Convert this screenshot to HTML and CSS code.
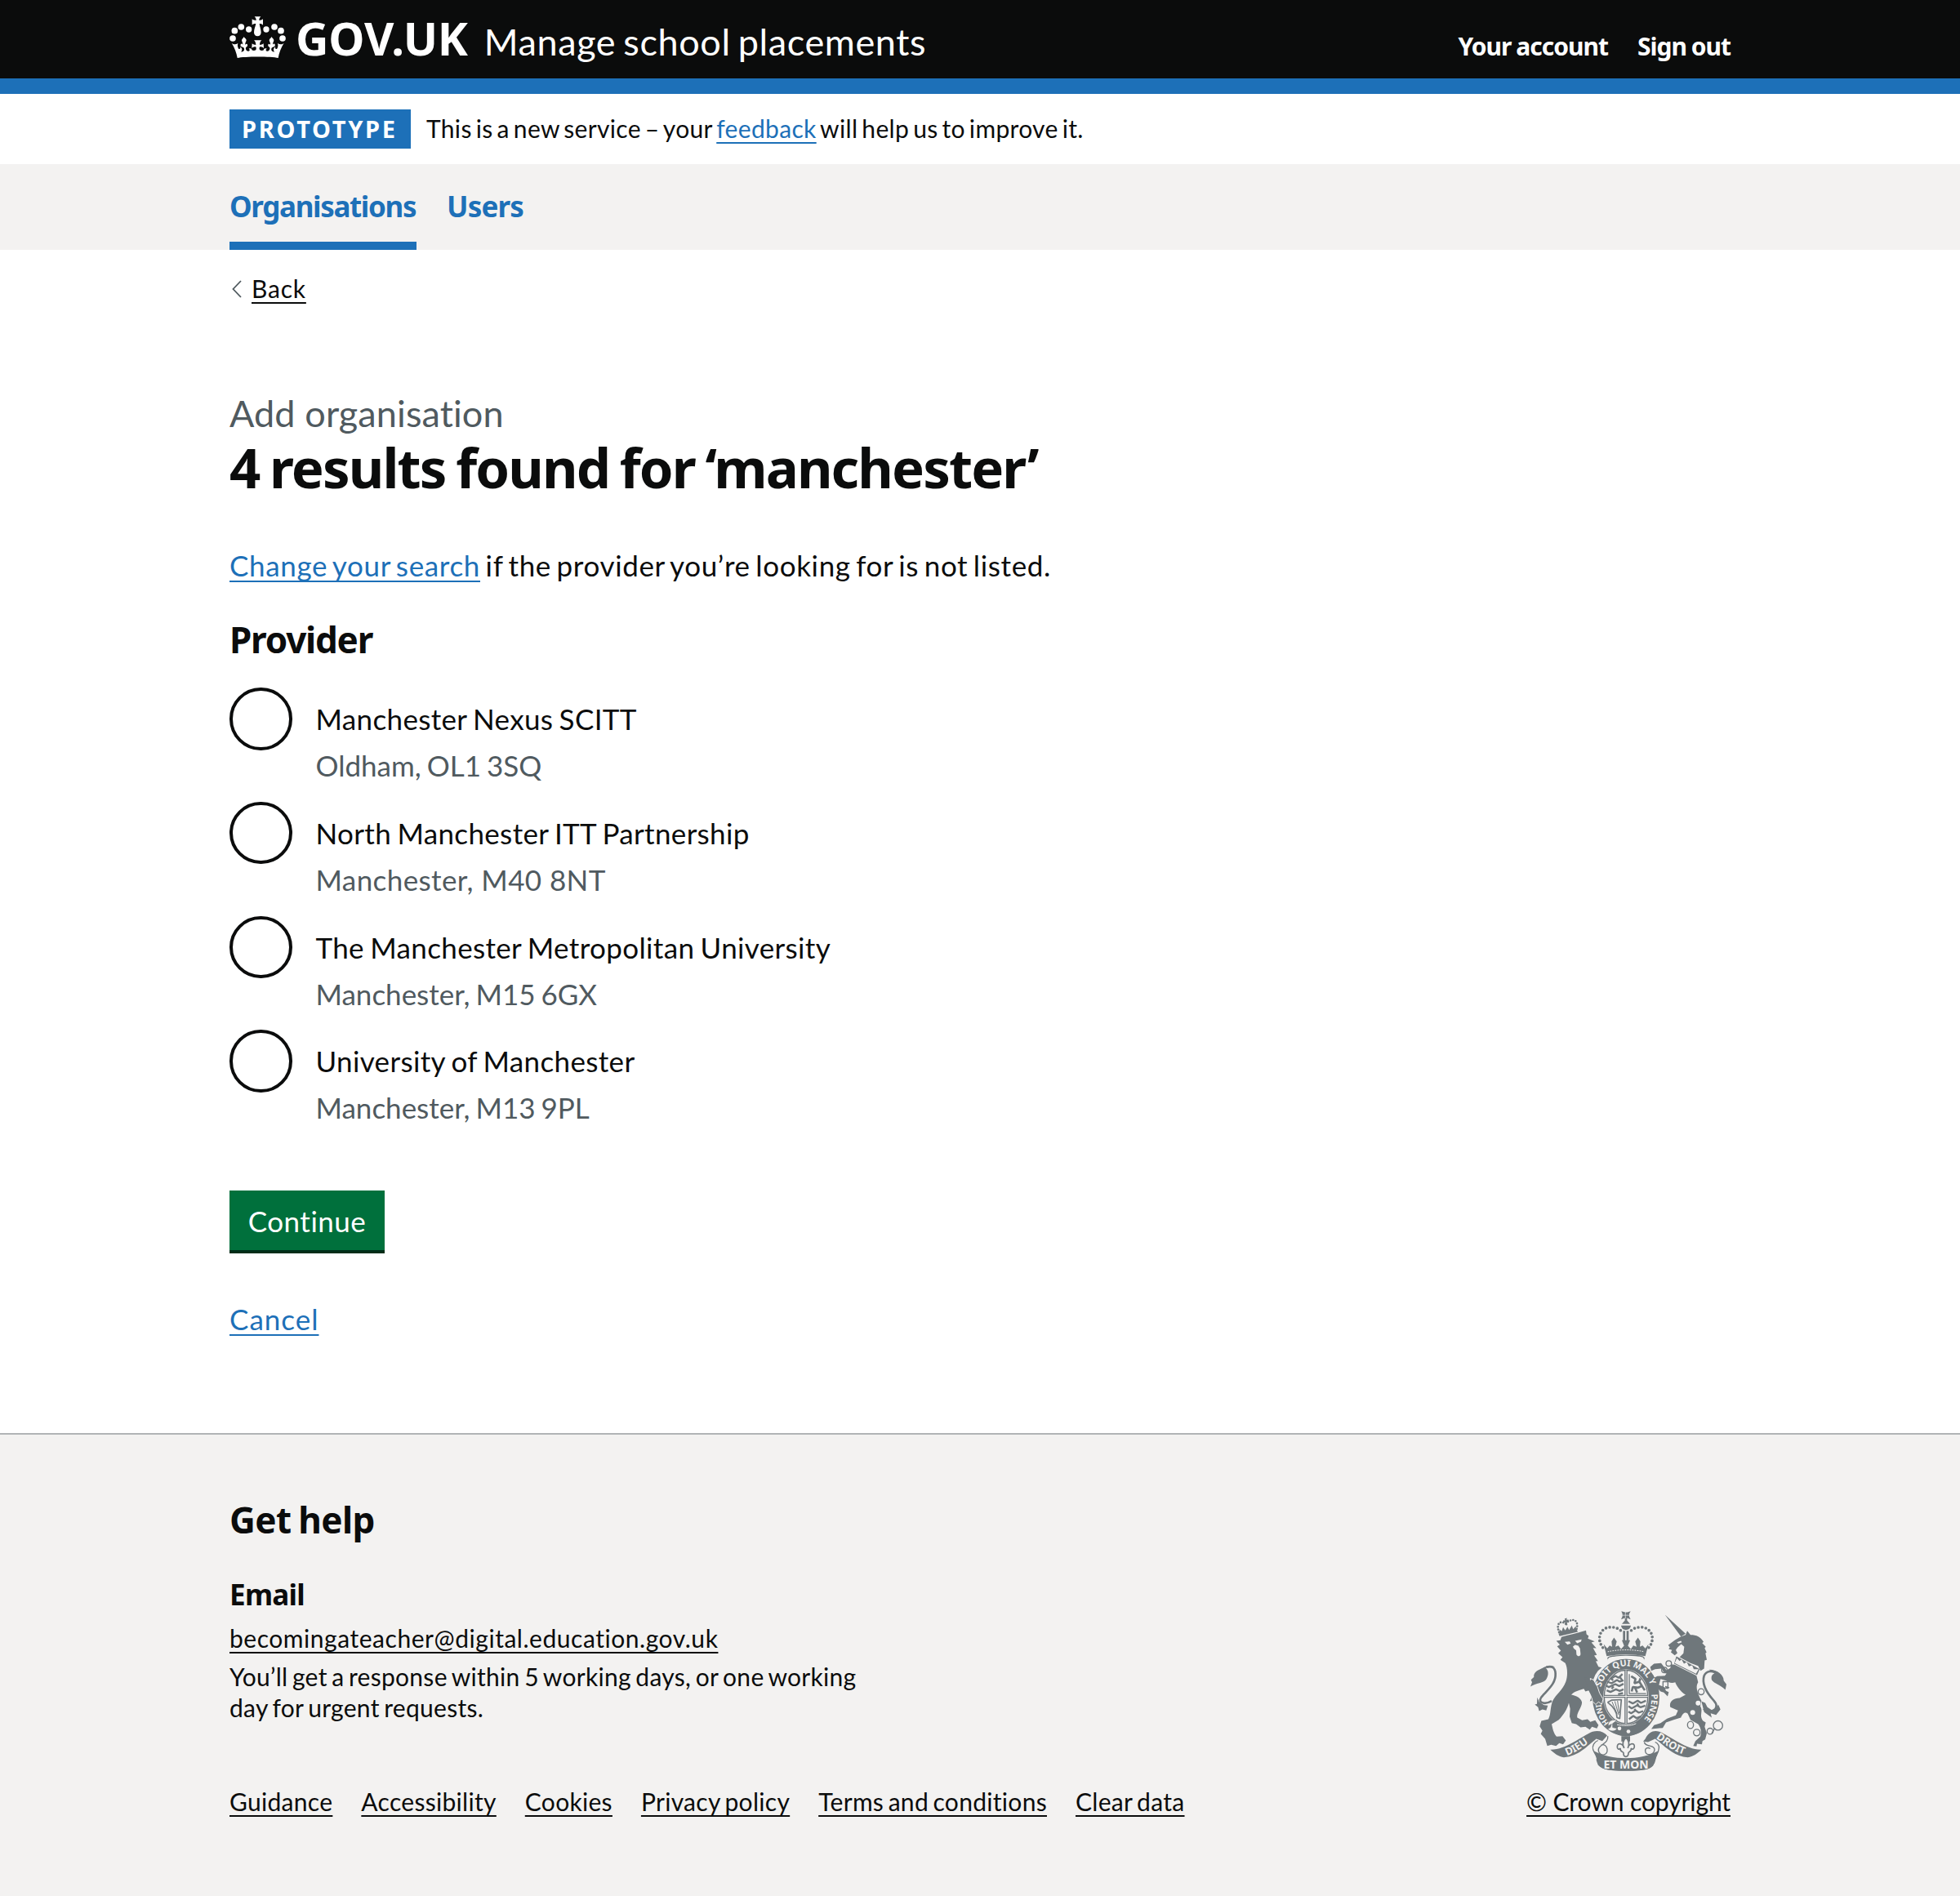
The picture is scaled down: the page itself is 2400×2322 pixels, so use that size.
FILE: index.html
```html
<!DOCTYPE html>
<html lang="en">
<head>
<meta charset="utf-8">
<title>4 results found for ‘manchester’ - Manage school placements - GOV.UK</title>
<link rel="stylesheet" href="styles.css">
</head>
<body>
<header class="header">
  <div class="container header-row">
    <svg class="crown" viewBox="15 18 207 153" preserveAspectRatio="none" aria-hidden="true" fill="#fff">
      <circle cx="27" cy="99" r="11.5"/><circle cx="34" cy="71" r="11.5"/><circle cx="58" cy="57" r="11.5"/><circle cx="86" cy="66" r="11"/>
      <circle cx="150" cy="66" r="11"/><circle cx="180" cy="57" r="11.5"/><circle cx="204" cy="71" r="11.5"/><circle cx="210" cy="99" r="11.5"/>
      <path d="M107 19H130C125 24 124 28 124 33C130 33 134 32 138 28V50C134 46 130 45 125 45C126 56 131 66 131 77C131 85 126 91 118 91S105 85 105 77C105 66 110 56 112 45C107 45 102 46 98 50V28C102 32 106 33 113 33C113 28 112 24 107 19Z"/>
      <path d="M44 171C41 151 33 132 23 116C30 122 38 122 46 117C43 127 46 133 49 138C54 139 57 135 54 129C61 134 64 143 57 148C69 150 72 139 67 133L60 130C56 128 53 122 58 119C61 118 63 120 64 123C65 115 59 109 60 105C61 101 66 98 68 93C71 98 76 101 77 105C78 109 71 115 73 123C75 119 80 118 81 122C82 126 80 129 76 131C72 136 77 147 85 146C90 145 91 139 86 137C92 134 98 137 97 142C104 145 112 144 113 139C114 133 112 131 111 130C106 130 102 131 97 135L98 118C102 122 106 123 112 123C112 115 109 110 105 106H133C129 110 126 115 126 123C132 123 136 122 140 118L141 135C136 131 132 130 127 130C125 132 124 134 125 139C127 144 134 145 141 142C140 137 146 134 152 137C147 139 148 145 153 146C161 147 166 136 162 131C158 129 156 126 157 122C158 118 163 119 165 123C167 115 160 109 161 105C162 101 167 98 170 93C172 98 177 101 178 105C179 109 173 115 174 123C175 120 177 118 180 119C185 122 182 128 178 130L171 133C166 139 169 150 181 148C174 143 177 134 184 129C181 135 184 139 189 138C192 133 195 127 192 117C200 122 208 122 215 116C205 132 197 151 194 171C170 165 68 165 44 171Z"/>
    </svg>
    <a class="logo" href="#">GOV.UK</a>
    <a class="service" href="#">Manage school placements</a>
    <nav class="account"><a class="acct" href="#">Your account</a><a class="acct" href="#">Sign out</a></nav>
  </div>
</header>
<div class="container phase">
  <strong class="tag">PROTOTYPE</strong>
  <span class="phase-text">This is a new service – your <a class="link" href="#">feedback</a> will help us to improve it.</span>
</div>
<nav class="primary">
  <div class="container primary-row">
    <a class="tab tab-current" href="#">Organisations</a><a class="tab tab-users" href="#">Users</a>
  </div>
</nav>
<main class="container main">
  <div class="back">
    <svg class="chevron" viewBox="0 0 12 22" aria-hidden="true"><path d="M11 1L1.5 11L11 21" fill="none" stroke="#505a5f" stroke-width="1.8"/></svg>
    <a class="dark-link back-link" href="#">Back</a>
  </div>
  <div class="caption">Add organisation</div>
  <h1 class="title">4 results found for ‘manchester’</h1>
  <p class="intro"><a class="link" href="#">Change your search</a> if the provider you’re looking for is not listed.</p>
  <h2 class="legend">Provider</h2>
  <div class="radios">
    <label class="radio"><span class="dot"></span><span class="radio-text"><span class="name">Manchester Nexus SCITT</span><span class="hint">Oldham, OL1 3SQ</span></span></label>
    <label class="radio"><span class="dot"></span><span class="radio-text"><span class="name">North Manchester ITT Partnership</span><span class="hint hint-wide">Manchester, M40 8NT</span></span></label>
    <label class="radio"><span class="dot"></span><span class="radio-text"><span class="name">The Manchester Metropolitan University</span><span class="hint">Manchester, M15 6GX</span></span></label>
    <label class="radio"><span class="dot"></span><span class="radio-text"><span class="name">University of Manchester</span><span class="hint">Manchester, M13 9PL</span></span></label>
  </div>
  <button class="button">Continue</button>
  <p class="cancel"><a class="link" href="#">Cancel</a></p>
</main>
<footer class="footer">
  <div class="container footer-row">
    <div class="footer-main">
      <h2 class="footer-title">Get help</h2>
      <h3 class="footer-sub">Email</h3>
      <p class="mail"><a class="dark-link" href="#">becomingateacher@digital.education.gov.uk</a></p>
      <p class="reply">You’ll get a response within 5 working days, or one working<br>day for urgent requests.</p>
      <div class="footer-links">
        <a class="dark-link" href="#">Guidance</a><a class="dark-link" href="#">Accessibility</a><a class="dark-link" href="#">Cookies</a><a class="dark-link" href="#">Privacy policy</a><a class="dark-link" href="#">Terms and conditions</a><a class="dark-link" href="#">Clear data</a>
      </div>
    </div>
    <div class="copyright">
      <svg class="crest" viewBox="102 68 720 590" aria-hidden="true" fill="#6f777b">
        <!-- lion's crown -->
        <g fill="none" stroke="#6f777b" stroke-width="8" stroke-dasharray="0 10" stroke-linecap="round">
          <path d="M207 148C195 118 212 102 232 118M272 136C280 108 262 93 236 112"/>
        </g>
        <path d="M205 153L272 137L276 147L209 163ZM228 98L236 96L235 103L242 102L243 110L236 110L238 122L231 123L230 112L223 113L222 105L229 105ZM210 152L208 137L217 145L222 130L230 142L238 128L244 140L254 124L259 137L269 126L270 138Z"/>
        <!-- lion -->
        <path d="M197 180L212 178L216 166C245 158 275 152 306 142L308 156L316 162L313 172L338 182L326 186L344 207L332 206L346 232L336 234L350 254L342 255L352 275L364 278L350 290L340 305L332 325L346 350L352 372L366 394L362 412L350 402L340 412L330 400L320 402L327 386L336 382L322 372L316 362L304 366L298 356C278 362 262 366 252 378C270 382 288 390 291 405C293 422 270 445 274 462L292 472L312 468L322 478L340 472L352 490L346 502L328 496L320 506L304 496L286 498L270 486L254 482L246 458L248 430L243 408C238 430 222 455 206 470L180 486C184 502 186 518 198 532L220 530L232 546L222 560L208 556L196 566L178 562L164 566L156 540L140 522L146 510L136 494L142 474L168 468C178 450 174 424 184 400C196 376 220 362 232 330C240 306 238 278 230 262L212 250L220 240L204 226L214 216L200 200L210 194Z"/>
        <path d="M228 184L246 182L250 190L238 194ZM266 180L290 175L288 183L274 189ZM258 201L266 195L278 198L284 208L286 226C288 238 276 240 271 230L270 215L261 208Z" fill="#f3f2f1"/>
        <path d="M180 401C150 418 122 405 148 380C170 356 196 334 194 300C193 280 182 270 160 277" fill="none" stroke="#6f777b" stroke-width="8"/>
        <path d="M192 275C165 265 152 278 138 284C119 292 113 302 115 313L104 323L108 332L102 348C125 334 154 336 162 318C170 303 168 288 158 280ZM127 388L126 412L118 414L130 424L134 438L146 432L160 436L166 418L152 416L134 404Z"/>
        <!-- unicorn -->
        <path d="M596 84L672 154L655 164ZM608 196L632 178L652 166L672 158L678 143L690 158C712 158 728 165 738 184L733 188L746 202L742 207L749 222L745 226L750 250L742 252L740 282L727 290L718 272L690 262L650 240L664 226L667 202L656 192L642 205L636 214L642 225L632 233L618 222L622 214L610 210L614 203Z"/>
        <path d="M640 185L655 180L658 185L646 190Z" fill="#f3f2f1"/>
        <path d="M638 237L724 284L714 306L630 264Z"/>
        <path d="M640 244L650 254L657 248L666 264L676 258L684 274L696 270L702 284L720 284L710 301L632 262Z" fill="#f3f2f1"/>
        <path d="M618 266L632 268L712 308L718 332C705 352 720 380 730 400L726 420C738 440 720 452 736 474L746 480L742 496L750 520L744 542L734 548L732 560L714 558L712 568L700 566L708 548L726 532C732 510 726 496 718 486L690 470L680 448C670 438 660 448 655 462L628 470L600 480L588 500L546 504L556 490L580 482L604 466L636 454L644 436L616 424C610 406 626 390 650 390L672 378C652 366 636 340 634 332C618 338 606 330 600 326L580 320L574 342L594 350L600 364L610 368L606 384L592 370L580 366L560 344L556 316L568 310L596 308L602 300C590 298 588 288 584 282L560 284L546 290L542 276L556 264L582 262L602 288L616 280Z"/>
        <path d="M738 430C760 452 804 430 776 400C752 374 730 340 740 308C748 290 768 288 788 298" fill="none" stroke="#6f777b" stroke-width="8"/>
        <path d="M758 286C790 286 812 306 812 326L822 340L818 360C798 340 778 338 768 324C764 308 772 302 778 300ZM730 402L744 408L752 424L768 434L784 430L792 414L800 432L784 452L764 446L768 462L740 442Z"/>
        <g fill="#f3f2f1"><circle cx="718" cy="409" r="9"/><circle cx="698" cy="443" r="9"/></g>
        <g fill="none" stroke="#6f777b" stroke-width="4"><circle cx="610" cy="263" r="10"/><circle cx="594" cy="287" r="10"/><path d="M589 330H607V354H589ZM597 348L612 352M768 520L780 500"/><circle cx="729" cy="367" r="11"/><ellipse cx="690" cy="489" rx="11" ry="13"/><circle cx="713" cy="517" r="12"/><circle cx="762" cy="512" r="11"/><circle cx="791" cy="491" r="17"/></g>
        <!-- royal crown -->
        <path d="M436 71L450 75H458L470 71L465 80V91L470 101L457 96V105L468 118H438L449 105V96L435 101L440 90V81Z"/>
        <path d="M451 73V98M438 86H468" stroke="#f3f2f1" stroke-width="2"/>
        <path d="M435 124H471C469 136 461 140 453 140S437 136 435 124ZM442 143H450V180H442ZM455 143H463V180H455Z"/>
        <g fill="none" stroke="#6f777b" stroke-width="11" stroke-dasharray="0 14" stroke-linecap="round"><path d="M368 205C342 170 360 132 394 130C415 129 428 136 436 144M537 205C564 170 545 132 511 130C490 129 478 136 470 144"/></g>
        <path d="M371 192L384 208L393 197L402 202L400 182L409 168L419 182L414 202L425 197L435 210L446 198L438 178H468L460 198L471 210L480 197L492 202L487 182L497 168L506 182L504 202L514 197L524 208L536 192L524 236C480 228 425 228 382 236Z"/>
        <path d="M386 220C425 211 481 211 520 220" fill="none" stroke="#f3f2f1" stroke-width="3" stroke-dasharray="5 4"/>
        <path d="M388 250C382 238 392 235 453 234S524 238 518 250" fill="none" stroke="#6f777b" stroke-width="4"/>
        <!-- garter and shield -->
        <ellipse cx="453" cy="388" rx="123" ry="142"/>
        <path d="M386 252C420 236 486 236 520 252" fill="none" stroke="#f3f2f1" stroke-width="10"/>
        <ellipse cx="453" cy="386" rx="84" ry="102" fill="#f3f2f1" stroke="#6f777b" stroke-width="1"/>
        <ellipse cx="453" cy="386" rx="80" ry="98" fill="none" stroke="#6f777b" stroke-width="4"/>
        <path d="M453 288V484M373 384H533" stroke="#6f777b" stroke-width="11"/>
        <path d="M453 288V484M373 384H533" stroke="#f3f2f1" stroke-width="3"/>
        <g fill="none" stroke="#6f777b" stroke-width="7" stroke-linejoin="bevel">
          <path d="M440 302L426 316L414 309L398 319L406 325M444 325L430 330L420 324L400 336L384 330M444 338L428 346L414 339L390 350L380 344M444 358L430 364L416 358L396 368L382 362M442 372L424 376M408 348L400 356M432 315L438 324"/>
          <path d="M526 400L508 408L496 400L478 410L462 402M524 418L506 424L494 417L474 428L462 420M516 438L500 444L488 436L472 446L462 440M508 458L492 464L480 456L464 468M494 410L500 420M484 430L490 438"/>
          <path d="M472 310L488 320L484 336L502 330L512 346L498 352L478 350L474 366M502 330L506 318M512 346L522 362M486 352L494 370" stroke-width="8"/>
          <path d="M465 302V374H527" stroke-width="4"/>
          <path d="M386 406L400 398L436 396L430 466L420 462C420 440 404 420 386 406Z" stroke-width="5"/>
          <path d="M402 404L420 448M412 402L426 452M422 400L428 446" stroke-width="3"/>
        </g>
        <path d="M322 318L334 324L348 348L356 372L369 394L364 413L352 404L342 414L330 402L325 378Z" stroke="#f3f2f1" stroke-width="3"/>
        <path d="M300 312L326 326L336 352L340 380L350 402L332 396L318 366Z"/>
        <g class="crest-text" fill="#f3f2f1">
          <path id="garter-left" d="M392 482Q361 448 361 400" fill="none"/>
          <path id="garter-top" d="M361 350A97 112 0 0 1 547 356" fill="none"/>
          <path id="garter-right" d="M546 376A95 112 0 0 1 500 486" fill="none"/>
          <text class="t-honi"><textPath href="#garter-left">HONI</textPath></text>
          <text class="t-garter"><textPath href="#garter-top">SOIT QUI MAL Y</textPath></text>
          <text class="t-garter"><textPath href="#garter-right">PENSE</textPath></text>
        </g>
        <path d="M388 480C420 492 470 502 530 490C510 518 482 530 450 530C424 528 404 518 390 504Z"/>
        <path d="M420 472C396 466 386 480 388 492L400 486L396 498L386 504C398 516 416 512 420 502L404 498V484Z" fill="#f3f2f1" stroke="#6f777b" stroke-width="2"/>
        <g fill="#f3f2f1"><circle cx="429" cy="502" r="7"/><circle cx="462" cy="513" r="7"/></g>
        <path d="M420 488C440 492 470 494 490 484" fill="none" stroke="#f3f2f1" stroke-width="3"/>
        <!-- motto ribbon -->
        <path d="M175 580C230 582 290 530 330 514C352 508 372 514 384 528L366 548L344 540C310 566 280 604 225 608C205 606 190 594 175 580ZM730 580C676 582 616 530 576 514C554 508 538 514 524 540L516 550L534 552L560 540C596 566 626 604 680 608C700 606 716 594 730 580Z"/>
        <path d="M350 546C336 552 328 566 332 580C340 600 350 606 346 618C352 650 380 656 453 656S554 650 560 616C562 600 572 596 574 574C576 562 568 556 560 552" fill="none" stroke="#6f777b" stroke-width="4"/>
        <path d="M334 584C400 620 506 620 572 584C562 602 562 618 552 640C536 656 500 657 453 657S368 656 350 636C346 612 344 600 334 584Z"/>
        <path d="M386 530C392 560 340 562 354 590C362 604 386 602 384 578C382 564 372 560 362 562M520 552C524 572 558 560 558 580C556 600 528 604 524 586C522 574 534 570 542 576" fill="#f3f2f1" stroke="#6f777b" stroke-width="4"/>
        <path d="M436 530H468V550H436Z"/>
        <path d="M453 536C466 548 466 560 460 574C462 560 484 550 484 568C484 578 476 582 472 574C474 590 462 586 462 592C462 610 442 610 444 592C444 586 430 590 432 574C428 582 420 578 421 568C422 550 444 560 446 574C438 560 440 548 453 536Z" fill="#f3f2f1" stroke="#6f777b" stroke-width="5"/>
        <g class="crest-text" fill="#f3f2f1">
          <path id="dieu" d="M236 602C275 590 305 560 336 542" fill="none"/>
          <path id="droit" d="M562 538C600 562 630 590 676 600" fill="none"/>
          <text class="t-ribbon"><textPath href="#dieu">DIEU</textPath></text>
          <text class="t-ribbon"><textPath href="#droit">DROIT</textPath></text>
          <text class="t-mon" x="453" y="648" text-anchor="middle">ET MON</text>
        </g>
      </svg>
      <a class="dark-link" href="#">© Crown copyright</a>
    </div>
  </div>
</footer>
</body>
</html>
```
FILE: styles.css
```css
* { box-sizing: border-box; }
body {
  margin: 0;
  background: #fff;
  color: #0b0c0c;
  font-family: Lato, "Noto Sans", sans-serif;
  font-size: 30px;
  line-height: 38px;
  font-variant-ligatures: none;
}
h1, h2, h3, p { margin: 0; }
h1, h2, h3, .logo, .acct, .tag, .tab, .crest-text { font-family: "Noto Sans", Lato, sans-serif; font-weight: 700; }
a { text-decoration: none; }
.container { width: 1838px; margin: 0 auto; }
.link, .dark-link {
  color: #1d70b8;
  text-decoration: underline;
  text-decoration-thickness: 2px;
  text-underline-offset: 5px;
  text-decoration-skip-ink: none;
}
.dark-link { color: #0b0c0c; }

/* Header */
.header { background: #0b0c0c; border-bottom: 19px solid #1d70b8; height: 115px; }
.header-row { display: flex; align-items: baseline; padding-top: 17px; color: #fff; }
.header-row a { color: #fff; }
.crown { width: 69px; height: 51px; margin-bottom: -6px; display: block; transform: translateY(3px); }
.logo { margin-left: 12px; font-size: 56px; line-height: 56px; letter-spacing: -0.2px; }
.service { margin-left: 20px; font-size: 45px; line-height: 50px; letter-spacing: 0.6px; word-spacing: -3px; }
.account { margin-left: auto; display: flex; gap: 36px; }
.acct { letter-spacing: -1px; word-spacing: -1px; }

/* Phase banner */
.phase { display: flex; gap: 19px; padding: 19px 0; height: 86px; }
.tag { width: 222px; height: 48px; padding-left: 15px; background: #1d70b8; color: #fff; font-size: 29px; line-height: 48px; letter-spacing: 2.7px; }
.phase-text { line-height: 46px; letter-spacing: 0.33px; word-spacing: -3px; }

/* Primary navigation */
.primary { background: #f3f2f1; height: 105px; }
.primary-row { display: flex; gap: 37px; }
.tab { height: 105px; padding-top: 31px; color: #1d70b8; font-size: 35px; line-height: 42px; letter-spacing: -1.35px; }
.tab-current { width: 229px; border-bottom: 10px solid #1d70b8; }
.tab-users { letter-spacing: -0.8px; }

/* Page content */
.main { padding-top: 28px; }
.back { display: flex; align-items: center; height: 38px; }
.chevron { width: 12px; height: 22px; margin: 2px 12px 0 3px; }
.back-link { letter-spacing: 0.8px; }
.caption { margin-top: 105px; color: #505a5f; font-size: 45px; line-height: 58px; letter-spacing: 0.1px; }
.title { margin-top: 1px; font-size: 67px; line-height: 73px; letter-spacing: -1.85px; word-spacing: -3px; }
.intro { margin-top: 59px; font-size: 35px; line-height: 48px; letter-spacing: 0.64px; word-spacing: -3px; }
.legend { margin-top: 39px; font-size: 44px; line-height: 56px; letter-spacing: -1.2px; }
.radios { margin-top: 31px; display: flex; flex-direction: column; gap: 20.8px; }
.radio { display: flex; gap: 29px; }
.dot { width: 76.5px; height: 76.5px; border: 4px solid #0b0c0c; border-radius: 50%; }
.radio-text { display: flex; flex-direction: column; gap: 9px; padding-top: 14px; font-size: 35px; line-height: 48px; }
.name { letter-spacing: 0.35px; word-spacing: -2px; }
.hint { color: #505a5f; letter-spacing: 0; word-spacing: -2px; }
.hint-wide { letter-spacing: 0.4px; word-spacing: 0; }
.button { display: block; width: 190px; height: 77px; margin-top: 78px; padding: 0; border: 0; border-bottom: 4px solid #002d18; background: #00703c; color: #fff; font: 35px/48px Lato, "Noto Sans", sans-serif; letter-spacing: 0.5px; }
.cancel { margin-top: 55.5px; font-size: 35px; line-height: 48px; letter-spacing: 1px; }

/* Footer */
.footer { margin-top: 116px; border-top: 2px solid #b1b4b6; background: #f3f2f1; padding: 76px 0 97px; }
.footer-row { display: flex; justify-content: space-between; align-items: flex-end; }
.footer-title { font-size: 44px; line-height: 56px; letter-spacing: -0.6px; word-spacing: -2px; }
.footer-sub { margin-top: 40px; font-size: 35px; line-height: 48px; letter-spacing: -0.7px; }
.mail { margin-top: 10px; letter-spacing: 0.54px; }
.reply { margin-top: 9px; letter-spacing: 0.28px; word-spacing: -2.4px; }
.footer-links { display: flex; gap: 35px; margin-top: 77px; letter-spacing: 0.3px; word-spacing: -2.5px; }
.copyright { display: flex; flex-direction: column; align-items: center; gap: 18px; letter-spacing: -0.1px; }
.crest { width: 240px; height: 197px; display: block; }
.crest-text { letter-spacing: 0; word-spacing: 0; }
.t-garter { font-size: 32px; }
.t-honi { font-size: 28px; }
.t-ribbon { font-size: 38px; }
.t-mon { font-size: 42px; }
```
